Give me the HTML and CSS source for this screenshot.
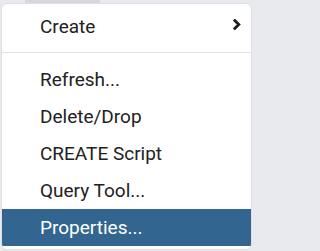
FILE: index.html
```html
<!DOCTYPE html>
<html>
<head>
<meta charset="utf-8">
<link rel="stylesheet" href="styles.css">
</head>
<body>
<div class="topstrip"></div>
<ul class="menu">
  <li class="item has-sub"><span>Create</span>
    <svg class="chev" viewBox="0 0 8 11" width="8" height="11"><path d="M1.8 1.6 L5.8 5.5 L1.8 9.4" fill="none" stroke="#1e1e1e" stroke-width="2.8" stroke-linecap="square"/></svg>
  </li>
  <li class="sep"></li>
  <li class="item">Refresh...</li>
  <li class="item">Delete/Drop</li>
  <li class="item">CREATE Script</li>
  <li class="item">Query Tool...</li>
  <li class="item active">Properties...</li>
</ul>
</body>
</html>
```
FILE: styles.css
```css
html, body {
  margin: 0;
  padding: 0;
}
body {
  background: #e8eaee;
  width: 254px;
  height: 251px;
  overflow: hidden;
  position: relative;
  font-family: Roboto, "Liberation Sans", sans-serif;
}
.topstrip {
  position: absolute;
  left: 25px;
  top: 0;
  width: 75px;
  height: 3px;
  background: #d6d8dd;
}
.menu {
  position: relative;
  list-style: none;
  margin: 3px 2px 0 1px;
  padding: 4px 0 3px;
  background: #fff;
  border: 1px solid #dcdfe5;
  border-radius: 6px;
  overflow: hidden;
}
.item {
  height: 37px;
  display: flex;
  align-items: center;
  justify-content: space-between;
  padding: 0 10px 0 38px;
  font-size: 19px;
  color: #222;
}
.chev {
  display: block;
  margin-bottom: 4px;
}
.sep {
  height: 1px;
  background: #dee1e6;
  margin: 7px 0 8px;
}
.active {
  background: #326690;
  color: #fff;
}
```
